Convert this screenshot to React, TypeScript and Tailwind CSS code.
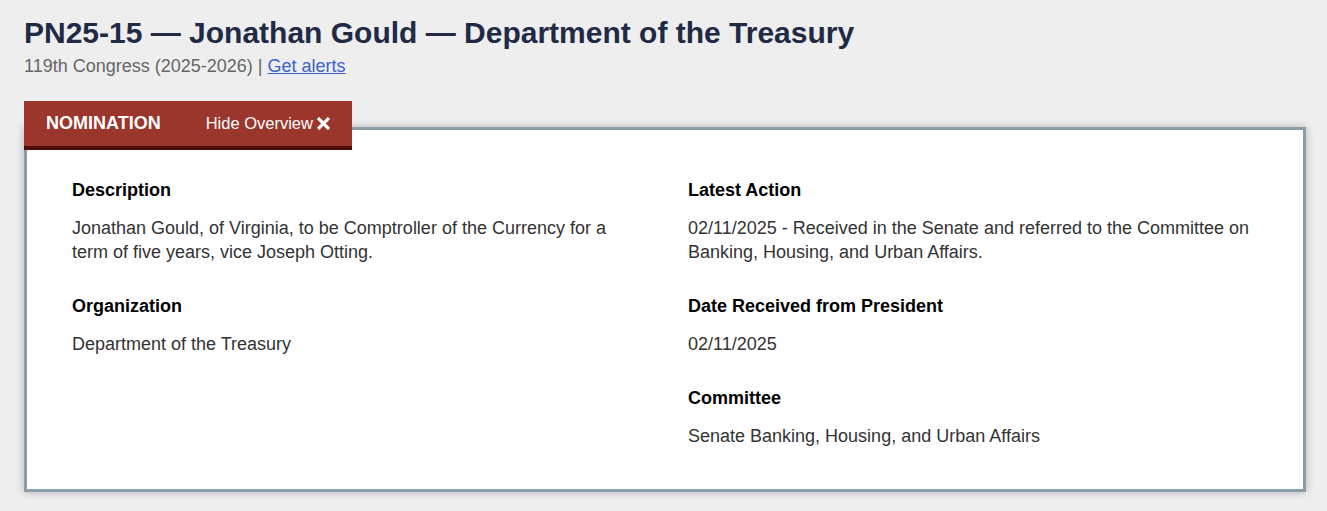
import React from "react";

const Field = ({ label, children }: { label: string; children: React.ReactNode }) => (
  <div className="mb-[30px]">
    <h3 className="text-[18px] font-bold leading-[24px] text-black">{label}</h3>
    <p className="mt-[14px] text-[18px] leading-[24px] text-[#333]">{children}</p>
  </div>
);

export default function App() {
  return (
    <div className="min-h-[511px] bg-[#eeeeee] px-[24px] pt-[14px] font-['Liberation_Sans',Arial,sans-serif]">
      <h1 className="text-[30px] font-bold leading-[38px] text-[#202a44]">
        PN25-15 — Jonathan Gould — Department of the Treasury
      </h1>
      <div className="mt-[2px] text-[18px] leading-[24px] text-[#666]">
        119th Congress (2025-2026) |{" "}
        <a href="#" className="text-[#3b62cc] underline">
          Get alerts
        </a>
      </div>

      <div className="relative mt-[23px] w-[1282px]">
        <div className="relative z-10 flex h-[49px] w-[328px] items-center border-b-[4px] border-[#4f0c07] bg-[#9a362b] text-white">
          <span className="ml-[22px] text-[18px] font-bold">NOMINATION</span>
          <span className="ml-[45px] flex items-center gap-[4px] text-[16.5px]">
            Hide Overview
            <svg width="13" height="13" viewBox="0 0 12 12" className="mb-[1px]">
              <path d="M2 2 L10 10 M10 2 L2 10" stroke="white" strokeWidth="3" strokeLinecap="square" />
            </svg>
          </span>
        </div>
        <div className="-mt-[23px] border-[3px] border-[#8a9eaa] bg-white px-[45px] pt-[48px] pb-[11px] shadow-[0_0_8px_rgba(0,0,0,0.25)]">
          <div className="grid grid-cols-2 gap-x-[46px]">
            <div>
              <Field label="Description">
                Jonathan Gould, of Virginia, to be Comptroller of the Currency for a term of five years, vice Joseph Otting.
              </Field>
              <Field label="Organization">Department of the Treasury</Field>
            </div>
            <div>
              <Field label="Latest Action">
                02/11/2025 - Received in the Senate and referred to the Committee on Banking, Housing, and Urban Affairs.
              </Field>
              <Field label="Date Received from President">02/11/2025</Field>
              <Field label="Committee">Senate Banking, Housing, and Urban Affairs</Field>
            </div>
          </div>
        </div>
      </div>
    </div>
  );
}
